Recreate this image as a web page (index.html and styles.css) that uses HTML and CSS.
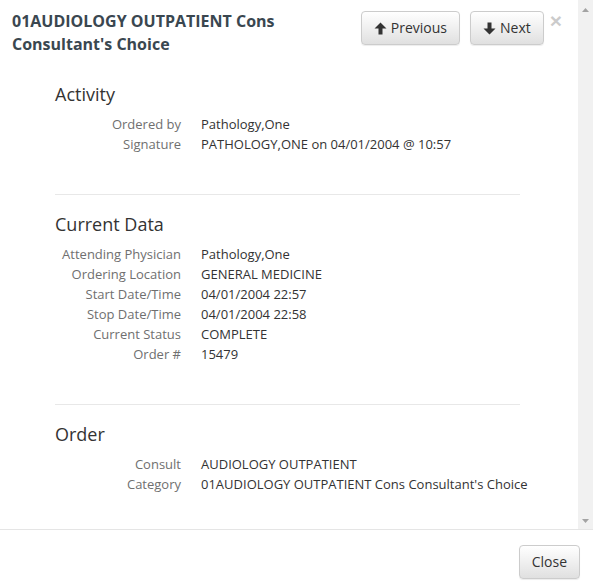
FILE: index.html
```html
<!DOCTYPE html>
<html>
<head>
<meta charset="utf-8">
<link rel="stylesheet" href="styles.css">
</head>
<body>
<div class="modal">
  <div class="scroll">
    <div class="content">
      <div class="header">
        <h4 class="title">01AUDIOLOGY OUTPATIENT Cons Consultant's Choice</h4>
        <div class="nav">
          <button class="btn"><svg class="ico" viewBox="0 0 13 13"><path d="M6.5 0.5 L12.5 6.5 L8.5 6.5 L8.5 12.5 L4.5 12.5 L4.5 6.5 L0.5 6.5 Z"/></svg>Previous</button>
          <button class="btn"><svg class="ico" viewBox="0 0 13 13"><path d="M6.5 12.5 L12.5 6.5 L8.5 6.5 L8.5 0.5 L4.5 0.5 L4.5 6.5 L0.5 6.5 Z"/></svg>Next</button>
        </div>
        <span class="close">×</span>
      </div>
      <div class="body">
        <section class="sec">
          <h3 class="sec-title">Activity</h3>
          <dl class="rows">
            <dt>Ordered by</dt><dd>Pathology,One</dd>
            <dt>Signature</dt><dd>PATHOLOGY,ONE on 04/01/2004 @ 10:57</dd>
          </dl>
        </section>
        <hr class="sep">
        <section class="sec">
          <h3 class="sec-title">Current Data</h3>
          <dl class="rows">
            <dt>Attending Physician</dt><dd>Pathology,One</dd>
            <dt>Ordering Location</dt><dd>GENERAL MEDICINE</dd>
            <dt>Start Date/Time</dt><dd>04/01/2004 22:57</dd>
            <dt>Stop Date/Time</dt><dd>04/01/2004 22:58</dd>
            <dt>Current Status</dt><dd>COMPLETE</dd>
            <dt>Order #</dt><dd>15479</dd>
          </dl>
        </section>
        <hr class="sep">
        <section class="sec">
          <h3 class="sec-title">Order</h3>
          <dl class="rows">
            <dt>Consult</dt><dd>AUDIOLOGY OUTPATIENT</dd>
            <dt>Category</dt><dd>01AUDIOLOGY OUTPATIENT Cons Consultant's Choice</dd>
          </dl>
        </section>
      </div>
    </div>
    <div class="sbar">
      <svg class="arr" viewBox="0 0 7 4"><path d="M3.5 0 L7 4 L0 4 Z"/></svg>
      <svg class="arr" viewBox="0 0 7 4"><path d="M0 0 L7 0 L3.5 4 Z"/></svg>
    </div>
  </div>
  <div class="footer">
    <button class="btn">Close</button>
  </div>
</div>
</body>
</html>
```

FILE: styles.css
```css
* { box-sizing: border-box; }
html, body { margin: 0; padding: 0; background: #fff; }
body { font-family: "Open Sans", "Noto Sans", sans-serif; color: #333; }
.modal { width: 593px; height: 585px; display: flex; flex-direction: column; overflow: hidden; }
.scroll { flex: 1; display: flex; min-height: 0; }
.content { flex: 1; min-width: 0; }
.sbar { width: 15px; background: #f1f1f1; display: flex; flex-direction: column; justify-content: space-between; align-items: center; padding: 8px 0 6px; }
.arr { width: 7px; height: 4px; fill: #a3a3a3; }
.header { display: flex; align-items: flex-start; padding: 10px 16px 0 12px; }
.title { flex: 1; margin: 0; font-size: 16px; line-height: 22.86px; font-weight: 700; color: #3a4750; padding-right: 10px; }
.nav { display: flex; gap: 10px; margin-top: 1px; }
.btn {
  font-family: "Open Sans", "Noto Sans", sans-serif; font-size: 14px; line-height: 20px; color: #333;
  padding: 6px 12px; border: 1px solid #ccc; border-radius: 4px;
  background: linear-gradient(#fff, #e0e0e0);
  box-shadow: inset 0 1px 0 rgba(255,255,255,.15), 0 1px 1px rgba(0,0,0,.075);
  display: inline-flex; align-items: center;
}
.ico { width: 13px; height: 13px; fill: #333; margin-right: 4px; }
.close { font-size: 21px; font-weight: 700; line-height: 1; color: #000; opacity: .2; margin-left: 6px; margin-top: 0; font-family: "Helvetica Neue", "Liberation Sans", sans-serif; }
.body { padding: 28px 58px 0 55px; }
.sec-title { margin: 0; font-size: 18px; font-weight: 400; line-height: 20px; color: #333; }
.rows { display: grid; grid-template-columns: 126px 1fr; column-gap: 20px; margin: 10px 0 0; font-size: 13px; line-height: 20px; }
.rows dt { text-align: right; color: #6f6f6f; white-space: nowrap; }
.rows dd { margin: 0; color: #333; white-space: nowrap; }
.sep { border: 0; border-top: 1px solid #e8e8e8; margin: 40px 0 19px; }
.footer { border-top: 1px solid #e5e5e5; padding: 15px 13px 6px 15px; display: flex; justify-content: flex-end; }
```
